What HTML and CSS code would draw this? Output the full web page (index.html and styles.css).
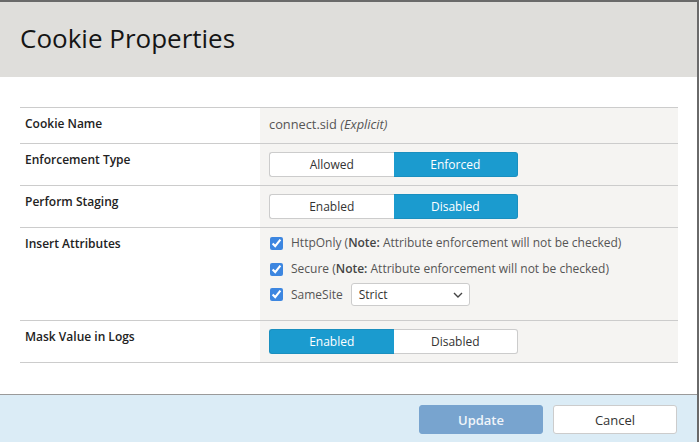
FILE: index.html
```html
<!DOCTYPE html>
<html>
<head>
<meta charset="utf-8">
<link rel="stylesheet" href="styles.css">
</head>
<body>
<div class="dialog">
  <div class="header"><h1 class="title">Cookie Properties</h1></div>
  <div class="content">
    <div class="props">
      <div class="row row-name">
        <div class="label">Cookie Name</div>
        <div class="value"><span class="muted">connect.sid <em>(Explicit)</em></span></div>
      </div>
      <div class="row">
        <div class="label">Enforcement Type</div>
        <div class="value">
          <div class="toggle"><span class="opt">Allowed</span><span class="opt active">Enforced</span></div>
        </div>
      </div>
      <div class="row">
        <div class="label">Perform Staging</div>
        <div class="value">
          <div class="toggle"><span class="opt">Enabled</span><span class="opt active">Disabled</span></div>
        </div>
      </div>
      <div class="row">
        <div class="label">Insert Attributes</div>
        <div class="value attrs">
          <label class="check"><input type="checkbox" checked><span>HttpOnly (<b>Note:</b> Attribute enforcement will not be checked)</span></label>
          <label class="check"><input type="checkbox" checked><span>Secure (<b>Note:</b> Attribute enforcement will not be checked)</span></label>
          <label class="check"><input type="checkbox" checked><span>SameSite</span>
            <span class="select">Strict<svg width="10" height="6" viewBox="0 0 10 6"><path d="M1 1l4 4 4-4" fill="none" stroke="#444" stroke-width="1.4"/></svg></span>
          </label>
        </div>
      </div>
      <div class="row">
        <div class="label">Mask Value in Logs</div>
        <div class="value">
          <div class="toggle"><span class="opt active">Enabled</span><span class="opt">Disabled</span></div>
        </div>
      </div>
    </div>
  </div>
  <div class="footer">
    <button class="btn btn-primary">Update</button>
    <button class="btn">Cancel</button>
  </div>
</div>
</body>
</html>
```
FILE: styles.css
```css
html, body {
  margin: 0;
  padding: 0;
  width: 699px;
  height: 442px;
  overflow: hidden;
  background: #ffffff;
  font-family: "Open Sans", "Liberation Sans", sans-serif;
}
.dialog {
  box-sizing: border-box;
  width: 699px;
  height: 442px;
  border-top: 2px solid #6a6a6a;
  border-right: 2px solid #6a6a6a;
  display: flex;
  flex-direction: column;
  background: #fff;
}
.header {
  box-sizing: border-box;
  height: 75px;
  background: #dfdedb;
  display: flex;
  align-items: center;
  padding: 0 0 3px 20px;
}
.title {
  margin: 0;
  font-size: 26px;
  line-height: 34px;
  font-weight: 400;
  color: #151515;
}
.content {
  padding: 30px 19px 31px 20px;
}
.props {
  border-bottom: 1px solid #cccccc;
}
.row {
  display: flex;
  border-top: 1px solid #cccccc;
  min-height: 41px;
}
.row-name {
  min-height: 35px;
}
.label {
  width: 235px;
  padding: 7px 0 0 5px;
  font-size: 12px;
  line-height: 18px;
  font-weight: 600;
  color: #222;
}
.value {
  flex: 1;
  background: #f5f4f2;
  padding: 8px 0 8px 9px;
  font-size: 12px;
  line-height: 18px;
  color: #444;
}
.row-name .value {
  padding-top: 7px;
}
.muted {
  color: #555;
  font-size: 12.8px;
}
.toggle {
  display: flex;
  width: 249px;
  height: 25px;
}
.opt {
  flex: 1;
  box-sizing: border-box;
  display: flex;
  align-items: center;
  justify-content: center;
  border: 1px solid #cccccc;
  background: #fff;
  color: #333;
  font-size: 12px;
}
.opt:first-child {
  border-radius: 3px 0 0 3px;
  border-right: none;
}
.opt:last-child {
  border-radius: 0 3px 3px 0;
  border-left: none;
}
.opt.active {
  background: #1b9bcf;
  border-color: #1a8fbf;
  color: #fff;
}
.attrs {
  display: flex;
  flex-direction: column;
  gap: 8px;
  padding-top: 6px;
  padding-bottom: 14px;
}
.check {
  display: flex;
  align-items: center;
  gap: 8px;
  color: #555;
  height: 18px;
}
.check b {
  font-weight: 600;
  color: #444;
}
.check:last-child {
  height: 23px;
  margin-top: -3px;
}
.check input {
  margin: 0 0 0 1px;
  width: 13px;
  height: 13px;
  accent-color: #3d86e0;
}
.select {
  margin-left: 0;
  box-sizing: border-box;
  width: 119px;
  height: 23px;
  border: 1px solid #cccccc;
  border-radius: 3px;
  background: #fff;
  display: flex;
  align-items: center;
  justify-content: space-between;
  padding: 0 6px 0 7px;
  color: #333;
}
.footer {
  flex: 1;
  background: #dbecf6;
  border-top: 1px solid #9a9a9a;
  display: flex;
  justify-content: flex-end;
  align-items: flex-start;
  gap: 10px;
  padding: 10px 20px 0 0;
}
.btn {
  width: 124px;
  height: 29px;
  border-radius: 3px;
  border: 1px solid #cccccc;
  background: #fff;
  color: #333;
  font-family: "Open Sans", "Liberation Sans", sans-serif;
  font-size: 13px;
}
.btn-primary {
  background: #78a4cf;
  border-color: #78a4cf;
  color: #f0f5fa;
  font-weight: 600;
}
```
